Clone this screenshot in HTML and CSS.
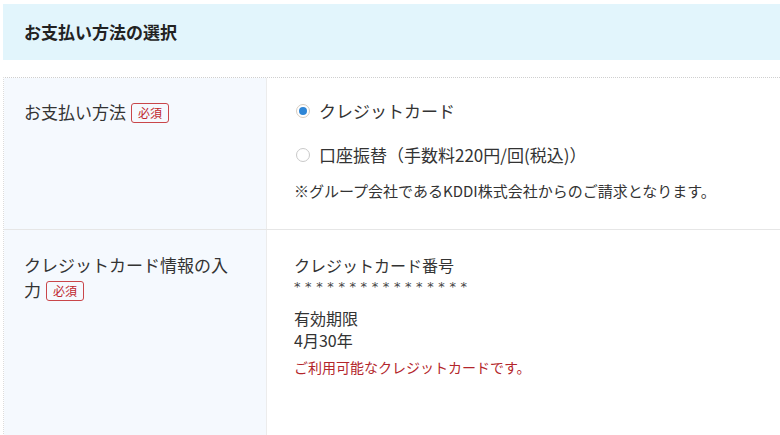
FILE: index.html
```html
<!DOCTYPE html>
<html lang="ja">
<head>
<meta charset="utf-8">
<link rel="stylesheet" href="styles.css">
</head>
<body>
<div class="wrap">
  <h2 class="heading">お支払い方法の選択</h2>
  <div class="table">
    <div class="row row-pay">
      <div class="label">お支払い方法<span class="req">必須</span></div>
      <div class="field">
        <label class="radio"><span class="dot checked"></span>クレジットカード</label>
        <label class="radio second"><span class="dot"></span>口座振替（手数料220円/回(税込)）</label>
        <p class="note">※グループ会社であるKDDI株式会社からのご請求となります。</p>
      </div>
    </div>
    <div class="row row-card">
      <div class="label">クレジットカード情報の入力<span class="req">必須</span></div>
      <div class="field">
        <div class="item-title">クレジットカード番号</div>
        <div class="stars">****************</div>
        <div class="item-title expiry">有効期限</div>
        <div class="item-value">4月30年</div>
        <div class="ok">ご利用可能なクレジットカードです。</div>
      </div>
    </div>
  </div>
</div>
</body>
</html>
```

FILE: styles.css
```css
html, body {
  margin: 0;
  padding: 0;
  background: #fff;
}
body {
  width: 780px;
  height: 435px;
  overflow: hidden;
  font-family: "Noto Sans CJK JP", "Noto Sans", sans-serif;
  color: #333;
}
.wrap {
  padding: 4px 0 0 3px;
}
.heading {
  margin: 0;
  height: 56px;
  line-height: 56px;
  padding-left: 21px;
  background: #e2f5fc;
  font-size: 17px;
  font-weight: bold;
  color: #222;
}
.table {
  margin-top: 17px;
  border-top: 1px dotted #cfcfcf;
  border-left: 1px dotted #dcdcdc;
}
.row {
  display: flex;
  border-bottom: 1px solid #e6e6e6;
}
.row-pay {
  height: 151px;
}
.row-card {
  height: 220px;
  border-bottom: none;
}
.label {
  width: 242px;
  flex: none;
  background: #f5f9fe;
  border-right: 1px solid #ececec;
  padding: 21px 0 0 20px;
  font-size: 17px;
  line-height: 25px;
  color: #333;
}
.row-card .label {
  padding-top: 22px;
  width: 212px;
  padding-right: 30px;
}
.req {
  display: inline-block;
  margin-left: 5px;
  padding: 0 6px;
  height: 18px;
  line-height: 18px;
  border: 1px solid #c9464a;
  border-radius: 3px;
  font-size: 12px;
  color: #c0262d;
  vertical-align: middle;
  position: relative;
  top: -1px;
  letter-spacing: 0;
}
.field {
  flex: 1;
  padding: 20px 0 0 27px;
}
.radio {
  display: flex;
  align-items: center;
  height: 25px;
  font-size: 17px;
  color: #333;
  padding-left: 2px;
}
.radio.second {
  margin-top: 19px;
}
.dot {
  width: 12px;
  height: 12px;
  border: 1px solid #c9c9c9;
  border-radius: 50%;
  margin-right: 9px;
  position: relative;
  flex: none;
  background: #fff;
}
.dot.checked {
  border-color: #d8cdbf;
}
.dot.checked::after {
  content: "";
  position: absolute;
  left: 2px;
  top: 2px;
  width: 8px;
  height: 8px;
  border-radius: 50%;
  background: #2f86d6;
}
.note {
  margin: 13px 0 0;
  font-size: 15px;
  line-height: 22px;
  color: #333;
}
.row-card .field {
  padding-top: 24px;
}
.item-title {
  font-size: 16px;
  line-height: 22px;
}
.stars {
  font-family: "DejaVu Sans", sans-serif;
  font-size: 13px;
  line-height: 18px;
  height: 20px;
  padding-top: 2px;
  box-sizing: border-box;
  letter-spacing: 4.6px;
  color: #444;
}
.expiry {
  margin-top: 11px;
}
.item-value {
  font-size: 16px;
  line-height: 22px;
}
.ok {
  margin-top: 5px;
  font-size: 14px;
  line-height: 22px;
  color: #b3262b;
}
```
